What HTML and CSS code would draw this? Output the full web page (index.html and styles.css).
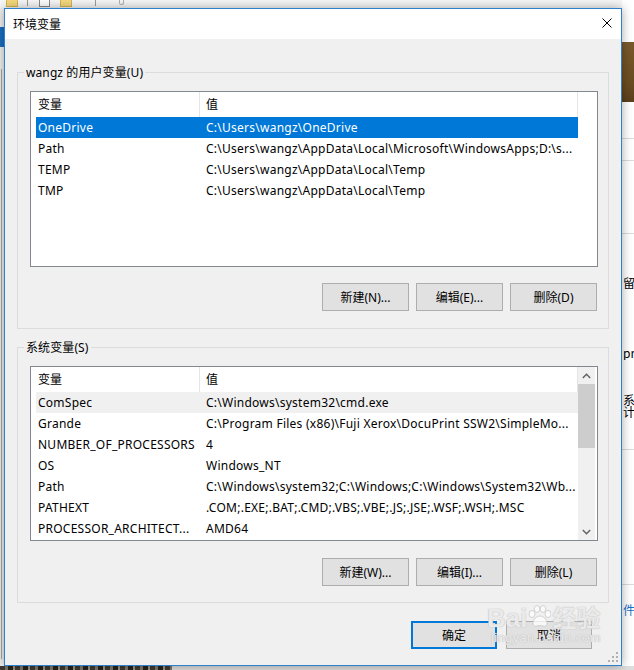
FILE: index.html
```html
<!DOCTYPE html>
<html lang="zh-CN">
<head>
<meta charset="utf-8">
<title>环境变量</title>
<link rel="stylesheet" href="styles.css">
</head>
<body>
<div class="desktop">
  <div class="bg-top">
    <span class="ico folder"></span><span class="tsep"></span><span class="ico doc"></span><span class="ico folder f2"></span><span class="tsep s2"></span><span class="ico clip"></span>
  </div>
  <div class="bg-left"><div class="bl-blue"></div><div class="bl-line"></div></div>
  <div class="bg-right">
    <div class="br-brown"></div>
    <div class="br-row r1"></div>
    <div class="br-row r2"></div>
    <div class="br-row r3"></div>
    <div class="br-text t1">留用</div>
    <div class="br-text t2">pre</div>
    <div class="br-text t3">系统</div>
    <div class="br-text t4">计此</div>
    <div class="br-row r4"></div>
    <div class="br-row r5"></div>
    <div class="br-text t5">件设</div>
  </div>
  <div class="bg-bottom"><div class="photo"></div></div>
</div>

<div class="dialog">
  <div class="titlebar">
    <span class="title">环境变量</span>
    <svg class="close" width="10" height="10" viewBox="0 0 10 10"><path d="M0.5 0.5L9.5 9.5M9.5 0.5L0.5 9.5" stroke="#000" stroke-width="1" fill="none"/></svg>
  </div>
  <div class="dbody">
    <fieldset class="group">
      <legend>wangz 的用户变量(U)</legend>
      <div class="gbody">
        <div class="list l1">
          <div class="lv">
            <div class="lv-head"><div class="h1">变量</div><div class="h2">值</div></div>
            <div class="row sel"><div class="c1">OneDrive</div><div class="c2">C:\Users\wangz\OneDrive</div></div>
            <div class="row"><div class="c1">Path</div><div class="c2">C:\Users\wangz\AppData\Local\Microsoft\WindowsApps;D:\s...</div></div>
            <div class="row"><div class="c1">TEMP</div><div class="c2">C:\Users\wangz\AppData\Local\Temp</div></div>
            <div class="row"><div class="c1">TMP</div><div class="c2">C:\Users\wangz\AppData\Local\Temp</div></div>
          </div>
        </div>
        <div class="btns">
          <button class="btn">新建(N)...</button>
          <button class="btn">编辑(E)...</button>
          <button class="btn">删除(D)</button>
        </div>
      </div>
    </fieldset>

    <fieldset class="group g2">
      <legend>系统变量(S)</legend>
      <div class="gbody">
        <div class="list l2">
          <div class="lv">
            <div class="lv-head"><div class="h1">变量</div><div class="h2">值</div></div>
            <div class="row dim"><div class="c1">ComSpec</div><div class="c2">C:\Windows\system32\cmd.exe</div></div>
            <div class="row"><div class="c1">Grande</div><div class="c2">C:\Program Files (x86)\Fuji Xerox\DocuPrint SSW2\SimpleMo...</div></div>
            <div class="row"><div class="c1">NUMBER_OF_PROCESSORS</div><div class="c2">4</div></div>
            <div class="row"><div class="c1">OS</div><div class="c2">Windows_NT</div></div>
            <div class="row"><div class="c1">Path</div><div class="c2">C:\Windows\system32;C:\Windows;C:\Windows\System32\Wb...</div></div>
            <div class="row"><div class="c1">PATHEXT</div><div class="c2">.COM;.EXE;.BAT;.CMD;.VBS;.VBE;.JS;.JSE;.WSF;.WSH;.MSC</div></div>
            <div class="row"><div class="c1">PROCESSOR_ARCHITECT...</div><div class="c2">AMD64</div></div>
          </div>
          <div class="sb">
            <div class="sb-arrow"><svg width="9" height="6" viewBox="0 0 9 6"><path d="M0.8 5L4.5 1.3L8.2 5" stroke="#606060" stroke-width="1.4" fill="none"/></svg></div>
            <div class="sb-thumb"></div>
            <div class="sb-track"></div>
            <div class="sb-arrow"><svg width="9" height="6" viewBox="0 0 9 6"><path d="M0.8 1L4.5 4.7L8.2 1" stroke="#606060" stroke-width="1.4" fill="none"/></svg></div>
          </div>
        </div>
        <div class="btns">
          <button class="btn">新建(W)...</button>
          <button class="btn">编辑(I)...</button>
          <button class="btn">删除(L)</button>
        </div>
      </div>
    </fieldset>

    <div class="footer">
      <button class="btn ok">确定</button>
      <button class="btn">取消</button>
    </div>
  </div>
  <div class="grip">
    <svg width="10" height="10" viewBox="0 0 10 10"><g fill="#b0b0b0"><rect x="8" y="0" width="2" height="2"/><rect x="4" y="4" width="2" height="2"/><rect x="8" y="4" width="2" height="2"/><rect x="0" y="8" width="2" height="2"/><rect x="4" y="8" width="2" height="2"/><rect x="8" y="8" width="2" height="2"/></g></svg>
  </div>
  <div class="watermark">
    <div class="wm-top"><span class="wm-bai">Bai</span><svg class="wm-paw" width="24" height="22" viewBox="0 0 24 22"><g fill="rgba(255,255,255,0.75)" stroke="#c8c8c8" stroke-width="0.8"><ellipse cx="5" cy="9" rx="3" ry="3.6"/><ellipse cx="10" cy="4" rx="2.8" ry="3.4"/><ellipse cx="16" cy="4" rx="2.8" ry="3.4"/><ellipse cx="21" cy="9" rx="3" ry="3.6"/><path d="M6 19c0-5 4-8 7-8s7 3 7 8c0 2-2 2.5-4 2-2-.5-4-.5-6 0-2 .5-4 0-4-2z"/></g></svg><span class="wm-jy">经验</span></div>
    <div class="wm-url">jingyan.baidu.com</div>
  </div>
</div>
</body>
</html>
```
FILE: styles.css
```css
* { box-sizing: border-box; }
html, body { margin: 0; padding: 0; }
body {
  width: 634px;
  height: 670px;
  overflow: hidden;
  position: relative;
  background: #f2f2f2;
  font-family: "Segoe UI", "Noto Sans", "Noto Sans CJK SC", sans-serif;
  font-size: 12px;
  color: #000;
}

/* ---------- desktop behind the dialog ---------- */
.desktop { position: absolute; inset: 0; }
.bg-top {
  position: absolute; left: 0; top: 0; right: 0; height: 8px;
  background: #f7f7f7;
  display: flex; align-items: flex-start;
}
.ico { display: block; height: 7px; }
.folder { width: 12px; margin-left: 6px; background: #f4d97e; border: 1px solid #d8b552; border-top: 0; }
.f2 { margin-left: 10px; }
.doc { width: 11px; margin-left: 11px; background: #fff; border: 1px solid #8a8a8a; border-top: 0; }
.tsep { display: block; width: 1px; height: 6px; margin-left: 9px; background: #9a9a9a; }
.s2 { margin-left: 23px; }
.clip { width: 5px; height: 5px; margin-left: 23px; border: 1px solid #b0b0b0; border-top: 0; border-radius: 0 0 3px 3px; }

.bg-left { position: absolute; left: 0; top: 8px; width: 4px; bottom: 4px; background: #f0f0f0; }
.bl-blue { height: 20px; margin-top: 19px; background: #1b6ec2; }
.bl-line { width: 1px; margin: 22px 0 0 1px; height: 590px; background: #a8a8a8; }

.bg-right { position: absolute; left: 622px; top: 0; width: 12px; bottom: 4px; background: #fff; }
.br-brown { height: 60px; margin-top: 42px; background: linear-gradient(#7a5a2c, #6a4c22 70%, #5b3f1c); }
.br-row { height: 1px; background: #dcdcdc; }
.r1 { margin-top: 36px; }
.r2 { margin-top: 21px; }
.r3 { margin-top: 72px; }
.br-text { font-family: "Noto Sans CJK SC", sans-serif; font-size: 12px; line-height: 14px; white-space: nowrap; overflow: hidden; padding-left: 1px; }
.t1 { margin-top: 42px; }
.t2 { margin-top: 56px; }
.t3 { margin-top: 33px; }
.t4 { margin-top: -2px; }
.r4 { margin-top: 30px; }
.r5 { margin-top: 134px; }
.t5 { margin-top: 18px; color: #1a6fc9; }

.bg-bottom { position: absolute; left: 0; right: 0; bottom: 0; height: 4px; background: #dedede; }
.photo { width: 172px; height: 4px; background: repeating-linear-gradient(90deg, #3d3b33 0 5px, #7c7868 5px 8px, #25241f 8px 13px, #9a957f 13px 15px); }

/* ---------- dialog ---------- */
.dialog {
  position: absolute; left: 4px; top: 8px;
  width: 618px; height: 658px;
  border: 1px solid #2e7fcc;
  background: #f0f0f0;
  box-shadow: 0 0 10px rgba(0, 0, 0, 0.35);
  display: flex; flex-direction: column;
}
.titlebar {
  flex: none; height: 30px; background: #fff;
  display: flex; align-items: center; justify-content: space-between;
  padding: 0 9px 2px 8px;
}
.title { font-family: "Noto Sans CJK SC", sans-serif; font-size: 12px; }
.close { display: block; }

.dbody { flex: 1; padding: 0 12px; display: flex; flex-direction: column; }

.group { margin: 25px 0 0; padding: 0; border: 1px solid #dcdcdc; min-width: 0; }
.g2 { margin-top: 10px; }
.group legend { padding: 0 2px; margin-left: 6px; line-height: 17px; letter-spacing: 0.1px; }
.gbody { padding: 10px 10px 17px 12px; }
.g2 .gbody { padding-bottom: 16px; }

.list { border: 1px solid #828790; background: #fff; display: flex; }
.l1 { height: 176px; }
.l2 { height: 175px; }
.lv { flex: 1; min-width: 0; overflow: hidden; }
.lv-head { display: flex; height: 25px; line-height: 25px; padding-top: 1px; }
.h1 { width: 169px; padding-left: 7px; border-right: 1px solid #e5e5e5; }
.h2 { width: 378px; padding-left: 6px; border-right: 1px solid #e5e5e5; }
.lv-head > div { margin-top: -1px; }
.row { display: flex; width: 542px; height: 21px; line-height: 21px; margin-left: 5px; white-space: nowrap; letter-spacing: 0.25px; }
.c1 { width: 164px; padding-left: 2px; overflow: hidden; }
.c2 { flex: 1; padding-left: 6px; overflow: hidden; }
.row.sel { background: #0078d7; color: #fff; }
.row.dim { background: #f0f0f0; }

.sb { width: 17px; margin-right: 2px; background: #f0f0f0; display: flex; flex-direction: column; }
.sb-arrow { height: 17px; display: flex; align-items: center; justify-content: center; }
.sb-thumb { height: 64px; background: #cdcdcd; }
.sb-track { flex: 1; }

.btns { display: flex; justify-content: flex-end; gap: 7px; margin: 16px 1px 0 0; }
.g2 .btns { margin-top: 17px; }
.btn {
  width: 87px; height: 28px;
  border: 1px solid #adadad; background: #e1e1e1;
  font: inherit; color: #000; padding: 0;
}
.footer { display: flex; justify-content: flex-end; gap: 9px; margin-top: 18px; padding-right: 17px; }
.footer .btn { width: 86px; }
.btn.ok { border: 2px solid #0078d7; }

.grip { position: absolute; right: 3px; bottom: 3px; line-height: 0; }

.watermark {
  position: absolute; left: 482px; top: 594px;
  pointer-events: none;
  color: rgba(255, 255, 255, 0.7);
  text-shadow: 0 0 1px #bdbdbd, 0 0 1px #bdbdbd;
}
.wm-top { display: flex; align-items: flex-end; }
.wm-bai { font-family: "Liberation Sans", sans-serif; font-weight: bold; font-size: 26px; line-height: 26px; }
.wm-paw { margin: 0 1px 4px 0; }
.wm-jy { font-family: "Noto Sans CJK SC", sans-serif; font-weight: bold; font-size: 24px; line-height: 28px; }
.wm-url { font-family: "Liberation Sans", sans-serif; font-size: 13px; margin: 0 0 0 4px; line-height: 14px; letter-spacing: 0.3px; }
```
